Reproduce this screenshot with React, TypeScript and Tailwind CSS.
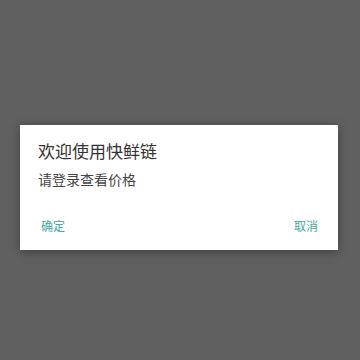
import React from "react";

export default function App() {
  return (
    <div
      className="w-[360px] h-[360px] bg-[#606060] pt-[125px] pl-[20px]"
      style={{ fontFamily: '"Noto Sans CJK SC", "Noto Sans", sans-serif' }}
    >
      <div className="w-[318px] h-[125px] bg-white shadow-[0_2px_10px_rgba(0,0,0,0.35)] flex flex-col">
        <div className="pl-[18px] pt-[14px]">
          <div className="text-[17px] leading-[24px] text-[#333333]">欢迎使用快鲜链</div>
          <div className="mt-[6px] text-[14px] leading-[20px] text-[#444444]">请登录查看价格</div>
        </div>
        <div className="mt-auto flex justify-between pl-[21px] pr-[20px] pb-[16px]">
          <span className="text-[12px] leading-[16px] text-[#45a99f]">确定</span>
          <span className="text-[12px] leading-[16px] text-[#45a99f]">取消</span>
        </div>
      </div>
    </div>
  );
}
